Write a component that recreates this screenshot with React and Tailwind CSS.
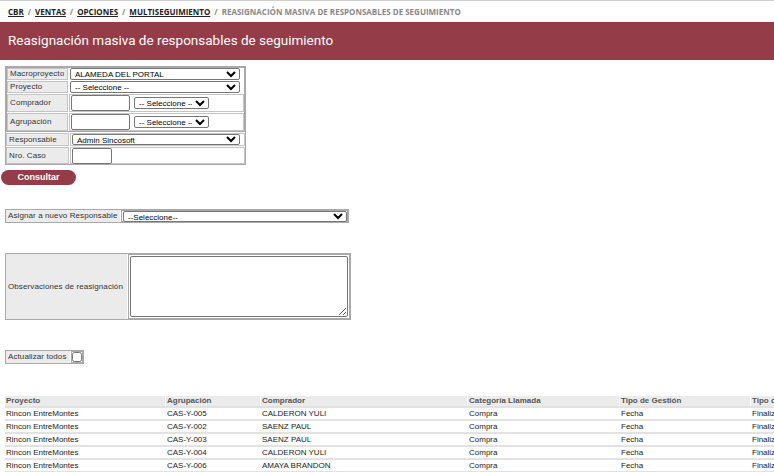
import React from 'react'

const rows = [
  ['Rincon EntreMontes', 'CAS-Y-005', 'CALDERON YULI', 'Compra', 'Fecha', 'Finalizado'],
  ['Rincon EntreMontes', 'CAS-Y-002', 'SAENZ PAUL', 'Compra', 'Fecha', 'Finalizado'],
  ['Rincon EntreMontes', 'CAS-Y-003', 'SAENZ PAUL', 'Compra', 'Fecha', 'Finalizado'],
  ['Rincon EntreMontes', 'CAS-Y-004', 'CALDERON YULI', 'Compra', 'Fecha', 'Finalizado'],
  ['Rincon EntreMontes', 'CAS-Y-006', 'AMAYA BRANDON', 'Compra', 'Fecha', 'Finalizado'],
]

const cols = ['w-[161px]', 'w-[95px]', 'w-[207px]', 'w-[152px]', 'w-[131px]', 'w-[120px]']
const heads = ['Proyecto', 'Agrupación', 'Comprador', 'Categoría Llamada', 'Tipo de Gestión', 'Tipo de Cierre']

const Label = ({ children, className = '' }) => (
  <div className={`bg-[#ebebeb] border border-[#c4c4c4] px-[2px] flex items-center whitespace-nowrap text-[#333] tracking-[0.1px] ${className}`}>
    {children}
  </div>
)

const Cell = ({ children, className = '' }) => (
  <div className={`flex-1 border border-[#c4c4c4] flex items-center gap-[4px] px-px ${className}`}>
    {children}
  </div>
)

const Select = ({ value, className = '' }) => (
  <select
    defaultValue={value}
    className={`bg-white border border-[#767676] rounded-[2px] text-[8px] leading-none text-black px-0 ${className}`}
  >
    <option>{value}</option>
  </select>
)

export default function App() {
  return (
    <div className="min-h-[472px] bg-white border-t border-[#cfcfcf] text-[8px] leading-none text-[#222] font-['Liberation_Sans',Arial,sans-serif] overflow-hidden">
      {/* breadcrumb */}
      <div className="h-[21px] pt-px flex items-center px-[8px] gap-[4px] text-[8px] font-bold font-['Open_Sans',sans-serif] text-[#888]">
        <span className="text-[#222] underline">CBR</span>/
        <span className="text-[#222] underline">VENTAS</span>/
        <span className="text-[#222] underline">OPCIONES</span>/
        <span className="text-[#222] underline">MULTISEGUIMIENTO</span>/
        <span>REASIGNACIÓN MASIVA DE RESPONSABLES DE SEGUIMIENTO</span>
      </div>

      <div className="h-[38px] bg-[#943d48] flex items-center px-[8px] text-white text-[13.5px] font-['Roboto',sans-serif]">
        Reasignación masiva de responsables de seguimiento
      </div>

      {/* filtros */}
      <div className="ml-[5px] mt-[6px] w-[241px] border border-[#a9a9a9] flex flex-col gap-px">
        <div className="border border-[#a9a9a9] flex flex-col gap-px">
          <div className="flex gap-px h-[12px]">
            <Label className="w-[61px]">Macroproyecto</Label>
            <Cell className="border-0">
              <Select value="ALAMEDA DEL PORTAL" className="w-[170px] h-[12px]" />
            </Cell>
          </div>
          <div className="flex gap-px h-[12px]">
            <Label className="w-[61px]">Proyecto</Label>
            <Cell className="border-0">
              <Select value="-- Seleccione --" className="w-[170px] h-[12px]" />
            </Cell>
          </div>
          <div className="flex gap-px h-[18px]">
            <Label className="w-[61px]">Comprador</Label>
            <Cell>
              <input className="w-[59px] h-[16px] border border-[#767676] rounded-[2px] bg-white" />
              <Select value="-- Seleccione --" className="w-[75px] h-[12px]" />
            </Cell>
          </div>
          <div className="flex gap-px h-[18px]">
            <Label className="w-[61px]">Agrupación</Label>
            <Cell>
              <input className="w-[59px] h-[16px] border border-[#767676] rounded-[2px] bg-white" />
              <Select value="-- Seleccione --" className="w-[75px] h-[12px]" />
            </Cell>
          </div>
        </div>
        <div className="flex gap-px h-[13px]">
          <Label className="w-[63px]">Responsable</Label>
          <Cell className="px-[2px]">
            <Select value="Admin Sincosoft" className="w-[168px] h-[11px]" />
          </Cell>
        </div>
        <div className="flex gap-px h-[17px]">
          <Label className="w-[63px]">Nro. Caso</Label>
          <Cell className="px-[1px]">
            <input className="w-[40px] h-[16px] border border-[#767676] rounded-[2px] bg-white" />
          </Cell>
        </div>
      </div>

      <button className="ml-[1px] mt-[5px] w-[75px] h-[15px] rounded-full bg-[#943d48] text-white text-[9px] font-bold flex items-center justify-center">
        Consultar
      </button>

      {/* nuevo responsable */}
      <div className="ml-[5px] mt-[24px] w-[344px] h-[14px] border border-[#a9a9a9] flex gap-px">
        <Label className="w-[114px] border-0">Asignar a nuevo Responsable</Label>
        <div className="flex-1 border border-[#a9a9a9] flex items-center pl-px">
          <Select value="--Seleccione--" className="w-[224px] h-[11px]" />
        </div>
      </div>

      <div className="ml-[5px] mt-[30px] w-[346px] h-[67px] border border-[#a9a9a9] flex gap-px">
        <Label className="w-[121px] border-0">Observaciones de reasignación</Label>
        <div className="flex-1 border border-[#a9a9a9] flex p-px">
          <textarea className="flex-1 border border-[#767676] rounded-[2px] bg-white" />
        </div>
      </div>

      <div className="ml-[5px] mt-[30px] w-[79px] h-[14px] border border-[#a9a9a9] flex gap-px">
        <Label className="w-[65px] border-0">Actualizar todos</Label>
        <div className="flex-1 border border-[#a9a9a9] flex items-center justify-center">
          <input type="checkbox" className="w-[10px] h-[10px] m-0" />
        </div>
      </div>

      {/* resultados */}
      <div className="ml-[5px] mt-[32px] w-[900px]">
        <div className="flex h-[12px] bg-[#ebebeb] border-b-2 border-[#e2e2e2]">
          {heads.map((h, i) => (
            <div key={h} className={`${cols[i]} border-r border-white flex items-center pl-px text-[#555] font-bold`}>
              {h}
            </div>
          ))}
        </div>
        {rows.map((r, j) => (
          <div key={j} className="flex h-[13px] border-b-2 border-[#e2e2e2]">
            {r.map((c, i) => (
              <div key={i} className={`${cols[i]} border-r border-white flex items-center pl-px text-[#222]`}>
                {c}
              </div>
            ))}
          </div>
        ))}
      </div>
    </div>
  )
}
